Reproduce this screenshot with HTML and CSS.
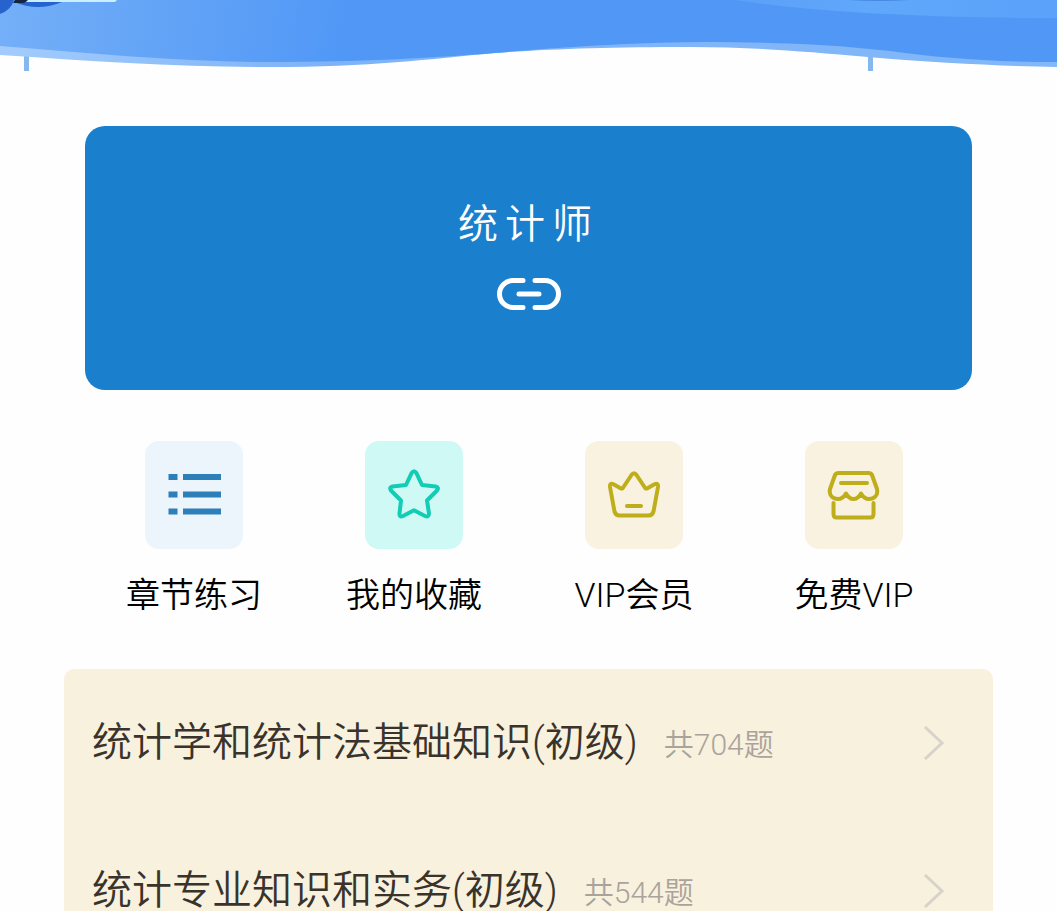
FILE: index.html
```html
<!DOCTYPE html>
<html lang="zh-CN">
<head>
<meta charset="utf-8">
<meta name="viewport" content="width=device-width, initial-scale=1">
<title>统计师</title>
<link rel="stylesheet" href="styles.css">
</head>
<body>
<header class="hero">
  <svg class="hero-wave" viewBox="0 0 1057 72" preserveAspectRatio="none" aria-hidden="true">
    <defs>
      <linearGradient id="sea" gradientUnits="userSpaceOnUse" x1="0" y1="20" x2="340" y2="60">
        <stop offset="0" stop-color="#74aff8"/>
        <stop offset="0.5" stop-color="#62a3f6"/>
        <stop offset="1" stop-color="#5198f6"/>
      </linearGradient>
      <linearGradient id="foam" x1="0" y1="0" x2="1" y2="0">
        <stop offset="0" stop-color="#a3ccfb"/>
        <stop offset="0.3" stop-color="#7eb3f7"/>
        <stop offset="1" stop-color="#82b7f8"/>
      </linearGradient>
      <linearGradient id="glow" x1="0" y1="0" x2="1" y2="0">
        <stop offset="0" stop-color="#5aa0f8"/>
        <stop offset="0.4" stop-color="#60a8fb"/>
        <stop offset="1" stop-color="#5aa2fa"/>
      </linearGradient>
    </defs>
    <path fill="#85b9ee" d="M24 54h5v17h-5zM868 54h5v17h-5z"/>
    <path fill="url(#foam)" d="M0 0H1057V67C1000 66 940 63 868 57C800 51 750 47 690 47C610 47 550 49 495 53C430 59 370 67 270 67C180 67 90 61 0 55Z"/>
    <path fill="url(#sea)" d="M0 0H1057V62C990 62 940 58 890 51C830 44 770 42 700 42C620 43 550 48 495 53C430 58 360 62 270 62C180 62 90 53 0 46Z"/>
    <path fill="url(#glow)" d="M735 0C800 10 910 18 1057 18V0Z"/>
    <path fill="#4689dc" d="M848 0Q879 2 910 0Z"/>
    <path fill="#2763cf" d="M0 0H14Q11 10 0 14ZM14 2Q38 12 62 2V0H16Z"/>
    <path fill="#14263f" d="M15 0H28L24 3H13Z"/>
    <path fill="#c8f0ff" d="M28 0H117L115 2H26Z"/>
  </svg>
</header>
<main class="page">
  <a class="banner" href="#subject">
    <span class="banner-title">统计师</span>
    <svg class="banner-icon" viewBox="0 0 66 34" aria-hidden="true">
      <path d="M27 3.500H17A13.500 13.500 0 0 0 17 30.500H27M39 3.500H49A13.500 13.500 0 0 1 49 30.500H39M23 17H43"/>
    </svg>
  </a>
  <nav class="shortcuts" aria-label="快捷入口">
    <a class="shortcut" href="#chapters">
      <span class="tile tile-blue">
        <svg class="icon icon-solid" viewBox="0 0 54 54" aria-hidden="true"><path d="M1.500 6h9v6h-9zM16 6h38v6H16zM1.500 23.500h9v6h-9zM16 23.500h38v6H16zM1.500 40.500h9v6h-9zM16 40.500h38v6H16z"/></svg>
      </span>
      <span class="label">章节练习</span>
    </a>
    <a class="shortcut" href="#favorites">
      <span class="tile tile-mint">
        <svg class="icon" viewBox="0 0 54 54" aria-hidden="true"><path d="M24.700 4.800Q27 1.500 29.300 4.800L35 17L48.500 18.500Q52.500 19.500 50 22.500L40 32.500L42 45.500Q42 49.500 38 48L27 42.300L16 48Q12 49.500 12.500 45.500L14 32.500L4 22.500Q1.800 19.500 5.500 18.500L19 17Z"/></svg>
      </span>
      <span class="label">我的收藏</span>
    </a>
    <a class="shortcut" href="#vip">
      <span class="tile tile-sand">
        <svg class="icon" viewBox="0 0 54 54" aria-hidden="true"><path d="M24.500 7Q27 3.500 29.500 7L38.500 20.500H40L47.500 16.300Q51.500 14.500 51 19L46.500 43.500Q45.500 47.500 41.500 47.500H12.500Q8.500 47.500 7.500 43.500L3 19Q2.500 14.500 6.500 16.300L14 20.500H15.500ZM20 38H34"/></svg>
      </span>
      <span class="label">VIP会员</span>
    </a>
    <a class="shortcut" href="#free">
      <span class="tile tile-sand">
        <svg class="icon" viewBox="0 0 54 54" aria-hidden="true"><path d="M11.500 5H41.500Q44 5 45 7L50 21C51.500 28 46.500 31 42 31Q37 31 34 25.500Q31 31 26.500 31T19 25.500Q16 31 11 31C6.500 31 1.500 28 3 21L8 7Q9 5 11.500 5ZM14 15H40M6.500 35V46Q6.500 49.500 9.500 49.500H43.500Q46.500 49.500 46.500 46V35"/></svg>
      </span>
      <span class="label">免费VIP</span>
    </a>
  </nav>
  <ul class="courses">
    <li>
      <a class="course" href="#course-1">
        <span class="course-name">统计学和统计法基础知识(初级)</span>
        <span class="course-count">共704题</span>
        <svg class="chevron" viewBox="0 0 22 36" aria-hidden="true"><path d="M2 2L19 18L2 34"/></svg>
      </a>
    </li>
    <li>
      <a class="course" href="#course-2">
        <span class="course-name">统计专业知识和实务(初级)</span>
        <span class="course-count">共544题</span>
        <svg class="chevron" viewBox="0 0 22 36" aria-hidden="true"><path d="M2 2L19 18L2 34"/></svg>
      </a>
    </li>
  </ul>
</main>
</body>
</html>
```
FILE: styles.css
```css
* {
  box-sizing: border-box;
}

body {
  margin: 0;
  background: #fefefe;
  color: #000;
  font-family: Roboto, "Noto Sans CJK SC", sans-serif;
  font-weight: 350;
}

a {
  color: inherit;
  text-decoration: none;
}

.hero-wave {
  display: block;
  width: 100%;
  height: 72px;
}

.page {
  padding: 54px 64px 0;
}

.banner {
  display: flex;
  flex-direction: column;
  align-items: center;
  gap: 22px;
  margin: 0 21px;
  padding: 69px 0 79px;
  border-radius: 20px;
  background: #1a7fcd;
  color: #fff;
}

.banner-title {
  font-size: 40px;
  line-height: 60px;
  letter-spacing: 7px;
}

.banner-icon {
  width: 66px;
  height: 34px;
  fill: none;
  stroke: #fff;
  stroke-width: 5;
  stroke-linecap: round;
}

.shortcuts {
  display: grid;
  grid-template-columns: repeat(4, 1fr);
  margin: 51px 29px 0 20px;
}

.shortcut {
  display: flex;
  flex-direction: column;
  align-items: center;
  gap: 21px;
}

.tile {
  display: flex;
  align-items: center;
  justify-content: center;
  width: 98px;
  height: 108px;
  border-radius: 14px;
}

.tile-blue {
  background: #edf5fc;
  color: #2c7fb8;
}

.tile-mint {
  background: #cff9f5;
  color: #12cdb4;
}

.tile-sand {
  background: #f9f2e0;
  color: #bfae1c;
}

.icon {
  width: 54px;
  height: 54px;
  fill: none;
  stroke: currentColor;
  stroke-width: 4;
  stroke-linecap: round;
  stroke-linejoin: round;
}

.icon-solid {
  fill: currentColor;
  stroke: none;
}

.label {
  font-size: 34px;
  line-height: 50px;
  white-space: nowrap;
}

.courses {
  margin: 49px 0 0;
  padding: 0;
  border-radius: 10px;
  background: #f7f1de;
  list-style: none;
}

.course {
  display: flex;
  align-items: center;
  min-height: 148px;
  padding: 0 48px 0 28px;
}

.course-name {
  color: #3a332b;
  font-size: 40px;
  line-height: 60px;
}

.course-count {
  margin-left: 26px;
  padding-top: 4px;
  color: #aaa39b;
  font-size: 30px;
  line-height: 44px;
}

.chevron {
  width: 22px;
  height: 36px;
  margin-left: auto;
  fill: none;
  stroke: #d8d2cb;
  stroke-width: 3;
}
```
